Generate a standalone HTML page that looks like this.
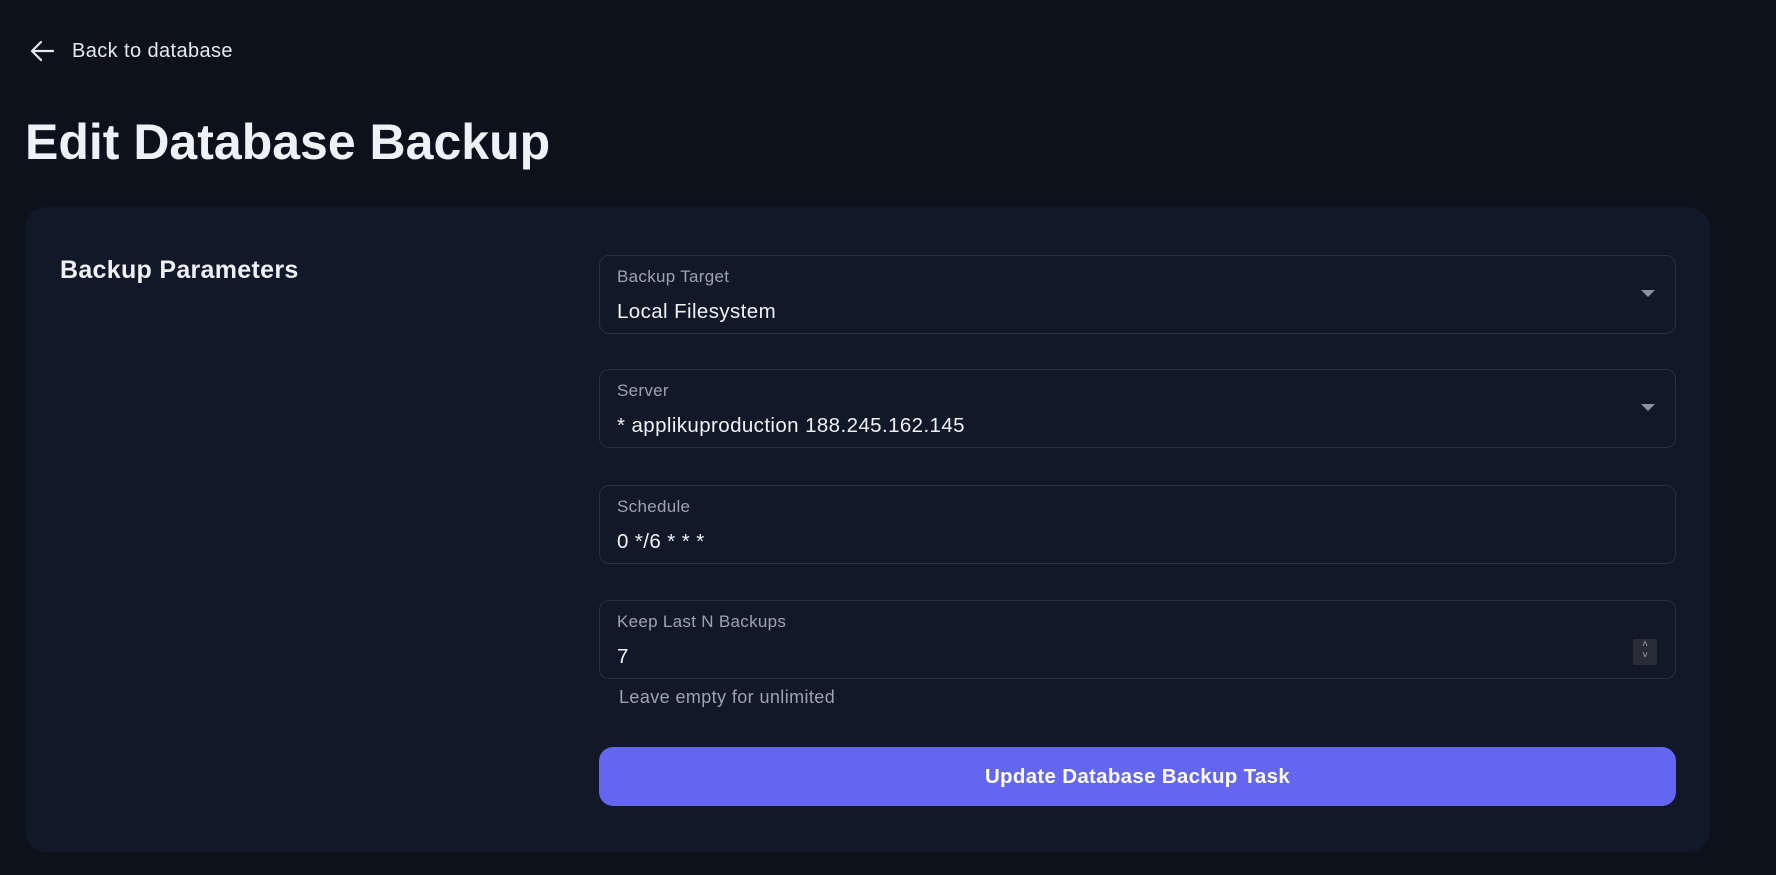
<!DOCTYPE html>
<html><head><style>
body{margin:0;width:1776px;height:875px;background:#0c111b;font-family:"Liberation Sans",sans-serif;color:#e5e9f0;position:relative;overflow:hidden}
.back{position:absolute;left:29px;top:39px;display:flex;align-items:center;font-size:20px;letter-spacing:0.4px;color:#e5e9f0}
.back svg{margin-right:17px}
h1{position:absolute;left:25px;top:113px;margin:0;font-size:50px;font-weight:bold;color:#eef2f7}
.card{position:absolute;left:25px;top:207px;width:1685px;height:645px;background:#111827;border-radius:22px}
.sec{position:absolute;left:60px;top:256px;font-size:25px;font-weight:bold;color:#eef2f7;letter-spacing:0.3px}
.f{position:absolute;left:599px;width:1075px;height:77px;border:1px solid #263142;border-radius:10px}
.f .l{position:absolute;left:17px;top:11px;font-size:17px;letter-spacing:0.3px;color:#9aa4b4}
.f .v{position:absolute;left:17px;top:44px;font-size:20.5px;letter-spacing:0.4px;color:#eef2f7}
.caret{position:absolute;right:20px;top:34px;width:0;height:0;border-left:7px solid transparent;border-right:7px solid transparent;border-top:7px solid #8a93a3}
.spin{position:absolute;right:18px;top:38px;width:24px;height:26px;background:#2a2d35;border-radius:2px;color:#aab;font-size:10px;text-align:center;line-height:11px}
.help{position:absolute;left:619px;top:687px;font-size:18px;letter-spacing:0.4px;color:#9aa4b4}
.btn{position:absolute;left:599px;top:747px;width:1077px;height:59px;background:#6366f1;border-radius:14px;color:#fff;font-weight:bold;font-size:20.5px;letter-spacing:0.3px;text-align:center;line-height:59px}
</style></head><body>
<div class="back"><svg width="26" height="24" viewBox="0 0 26 24"><path d="M24 12H3M12 3L3 12l9 9" stroke="#e5e9f0" stroke-width="2.2" fill="none" stroke-linecap="round" stroke-linejoin="round"/></svg>Back to database</div>
<h1>Edit Database Backup</h1>
<div class="card"></div>
<div class="sec">Backup Parameters</div>
<div class="f" style="top:255px"><div class="l">Backup Target</div><div class="v">Local Filesystem</div><div class="caret"></div></div>
<div class="f" style="top:369px"><div class="l">Server</div><div class="v">* applikuproduction 188.245.162.145</div><div class="caret"></div></div>
<div class="f" style="top:485px"><div class="l">Schedule</div><div class="v">0 */6 * * *</div></div>
<div class="f" style="top:600px"><div class="l">Keep Last N Backups</div><div class="v">7</div><div class="spin">˄<br>˅</div></div>
<div class="help">Leave empty for unlimited</div>
<div class="btn">Update Database Backup Task</div>
</body></html>
